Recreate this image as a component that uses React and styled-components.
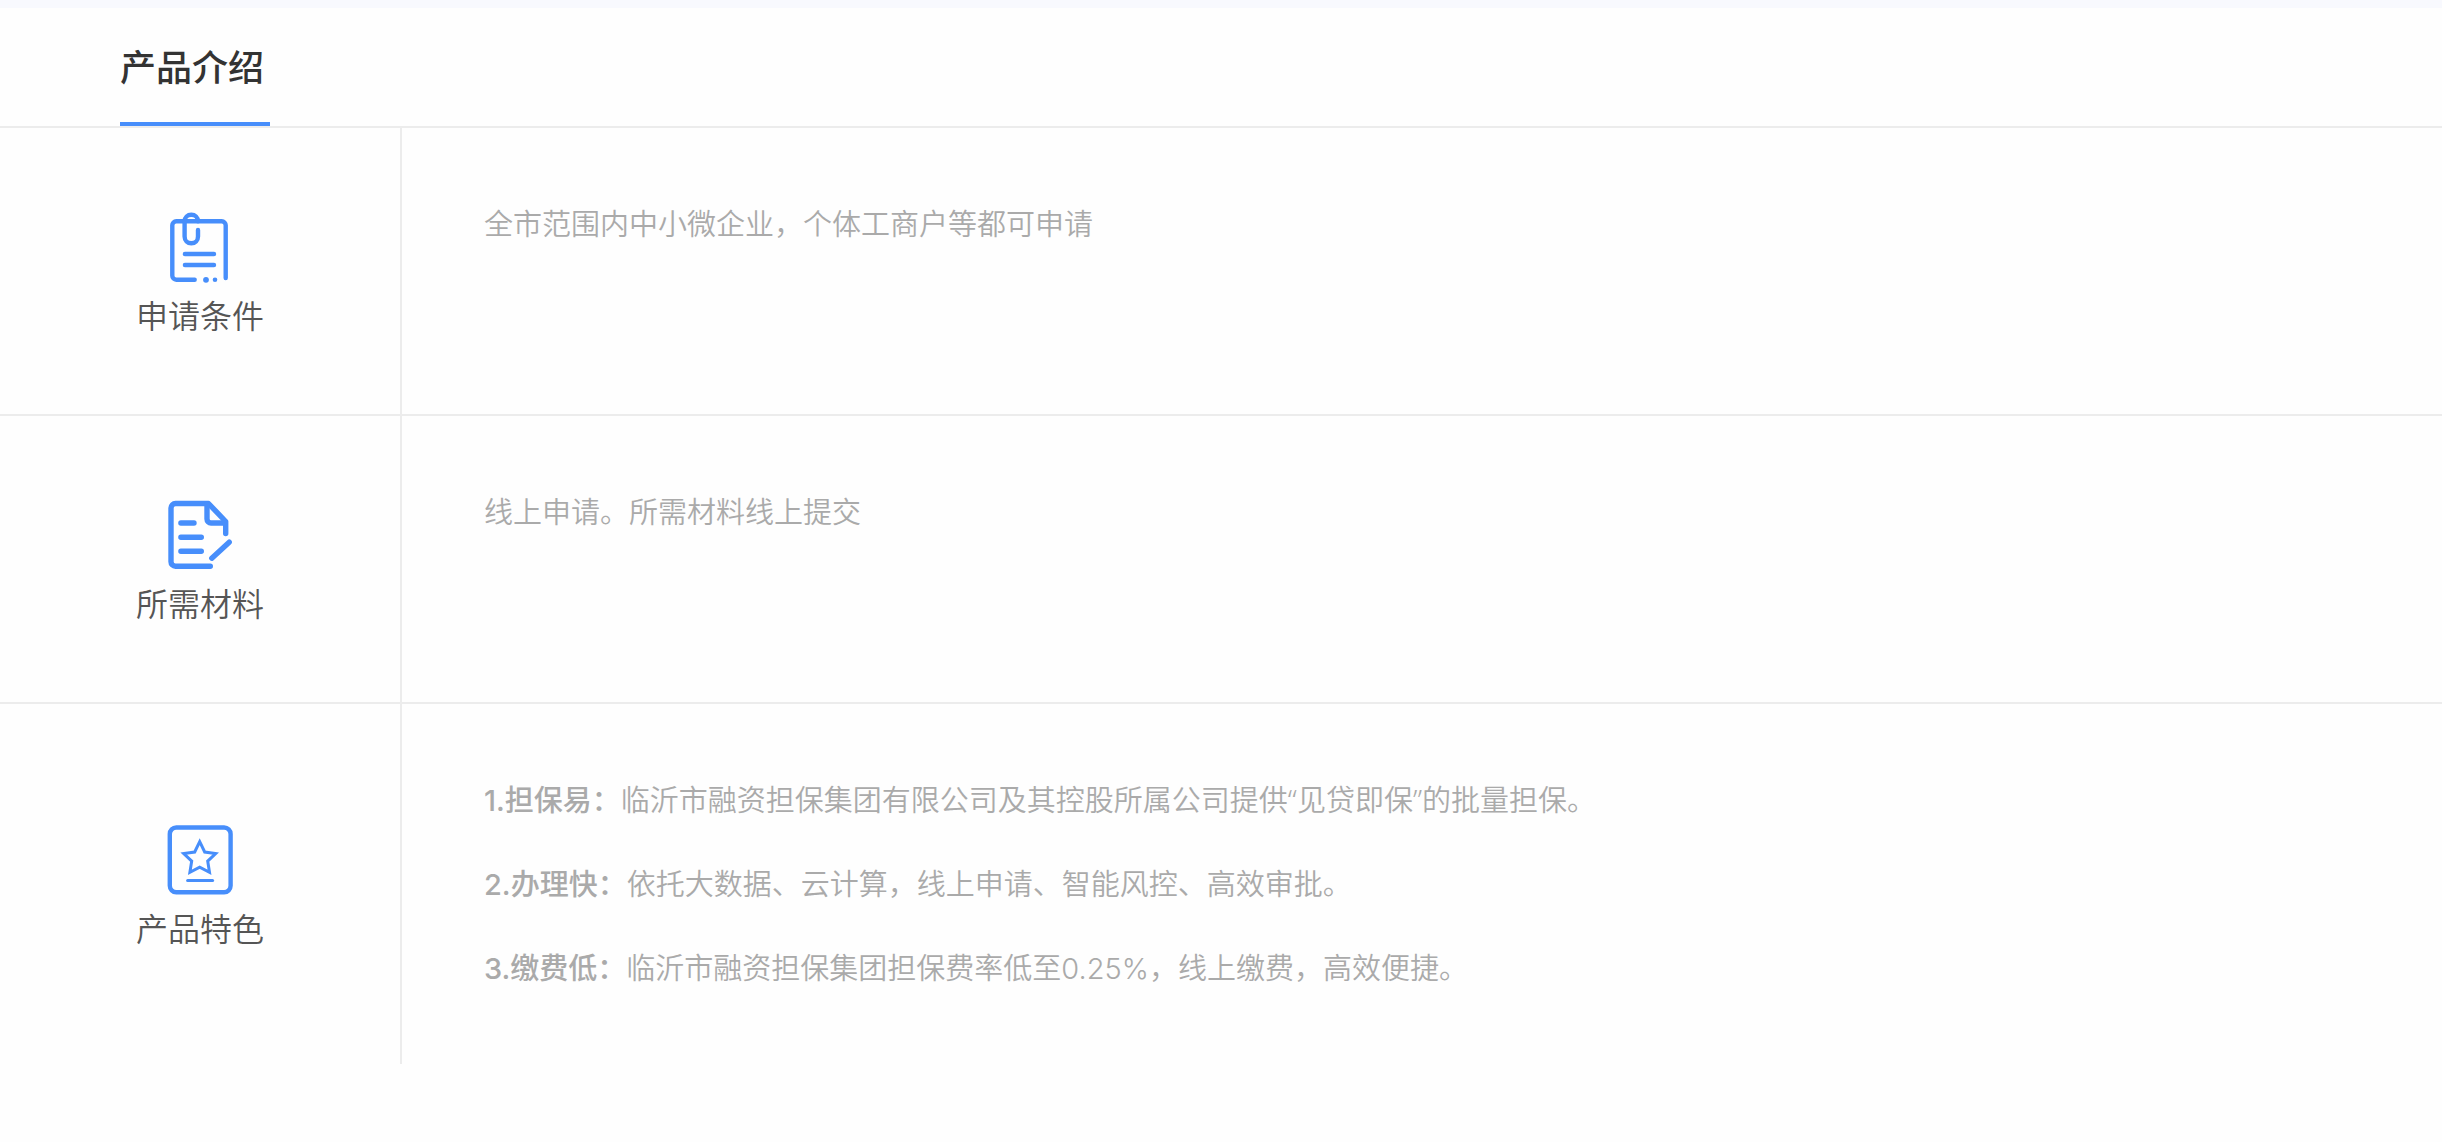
import styled, { createGlobalStyle } from 'styled-components';

const GlobalStyle = createGlobalStyle`
  * {
    box-sizing: border-box;
  }

  body {
    margin: 0;
    background: #fefefe;
    font-family: Inter, 'Noto Sans CJK SC', sans-serif;
  }
`;

const Page = styled.main`
  border-top: 8px solid #f8f9fe;
`;

const Header = styled.header`
  display: flex;
  padding: 0 120px;
  border-bottom: 2px solid #ececec;
`;

const Title = styled.h2`
  min-width: 150px;
  margin: 0;
  padding-top: 6px;
  border-bottom: 4px solid #478efb;
  color: #333;
  font-size: 36px;
  font-weight: 500;
  line-height: 108px;
`;

const Row = styled.section`
  display: flex;
  min-height: 288px;
  border-bottom: 2px solid #ececec;

  &:last-child {
    border-bottom: none;
  }
`;

const Side = styled.div`
  flex: none;
  width: 402px;
  padding-top: 2px;
  display: flex;
  flex-direction: column;
  align-items: center;
  justify-content: center;
  border-right: 2px solid #ececec;
`;

const Label = styled.h3`
  margin: 0;
  color: #555;
  font-size: 32px;
  font-weight: 350;
  line-height: 52px;
`;

const Content = styled.div`
  flex: 1;
  padding: 55px 82px 53px;
  color: #aaa;
  font-size: 29px;
  font-weight: 350;
  line-height: 84px;

  p {
    margin: 0;
  }

  strong {
    font-weight: 500;
  }
`;

const Quote = styled.q`
  quotes: none;
  font-family: 'Noto Sans', 'Noto Sans CJK SC', sans-serif;
  line-height: 1;
`;

const Icon = styled.svg`
  display: block;
  width: 90px;
  height: 90px;
  fill: none;
  stroke: #478efb;
  stroke-width: ${({ $stroke }) => $stroke};
  stroke-linecap: round;
`;

const ThinLines = styled.g`
  stroke-width: 3;
`;

const ConditionIcon = () => (
  <Icon viewBox="0 0 90 90" $stroke={4.4} aria-hidden="true">
    <path d="M39.7 78.7H21.3a4 4 0 0 1-4-4V24.3a4 4 0 0 1 4-4h45.4a4 4 0 0 1 4 4V77" />
    <path d="M43 20.3c0-4-3-6.6-6.7-6.6s-6.7 2.8-6.7 6.6v15.2c0 4 2.9 6.8 6.7 6.8s6.7-2.8 6.7-6.8V29" />
    <path d="M29.9 53H59M29.9 64H59" />
    <circle cx="51" cy="78.8" r="2.9" fill="#478efb" stroke="none" />
    <circle cx="60" cy="78.8" r="2.3" fill="#478efb" stroke="none" />
  </Icon>
);

const MaterialIcon = () => (
  <Icon viewBox="0 0 90 90" $stroke={5.4} aria-hidden="true">
    <path
      d="M55.3 77.2H20.5a4.5 4.5 0 0 1-4.5-4.5V19a4.5 4.5 0 0 1 4.5-4.5h33L70.7 32.5V44.5"
      strokeLinejoin="round"
    />
    <path d="M52 15.5V30a4 4 0 0 0 4 4h14" />
    <path d="M25.9 34H39M25.9 48.3h20.4M25.9 62.3h20.4M74.2 53.2L56.8 69.2" />
  </Icon>
);

const FeatureIcon = () => (
  <Icon viewBox="0 0 90 90" $stroke={4.4} aria-hidden="true">
    <rect x="14.8" y="13.5" width="60.8" height="64.8" rx="6.5" />
    <ThinLines>
      <path d="M44.7 27.6l5 10.4 11 1.5-8 7.6 1.8 11.2-9.8-5.1-9.8 5.1 1.8-11.2-8-7.6 11-1.5z" />
      <path d="M32.6 66.6h25" />
    </ThinLines>
  </Icon>
);

const InfoRow = ({ icon, label, children }) => (
  <Row>
    <Side>
      {icon}
      <Label>{label}</Label>
    </Side>
    <Content>{children}</Content>
  </Row>
);

const App = () => {
  return (
    <>
      <GlobalStyle />
      <Page lang="zh-CN">
        <Header>
          <Title>产品介绍</Title>
        </Header>
        <InfoRow icon={<ConditionIcon />} label="申请条件">
          <p>全市范围内中小微企业，个体工商户等都可申请</p>
        </InfoRow>
        <InfoRow icon={<MaterialIcon />} label="所需材料">
          <p>线上申请。所需材料线上提交</p>
        </InfoRow>
        <InfoRow icon={<FeatureIcon />} label="产品特色">
          <p>
            <strong>1.担保易：</strong>
            临沂市融资担保集团有限公司及其控股所属公司提供<Quote>“见贷即保”</Quote>的批量担保。
          </p>
          <p>
            <strong>2.办理快：</strong>
            依托大数据、云计算，线上申请、智能风控、高效审批。
          </p>
          <p>
            <strong>3.缴费低：</strong>
            临沂市融资担保集团担保费率低至0.25%，线上缴费，高效便捷。
          </p>
        </InfoRow>
      </Page>
    </>
  );
};

export default App;
